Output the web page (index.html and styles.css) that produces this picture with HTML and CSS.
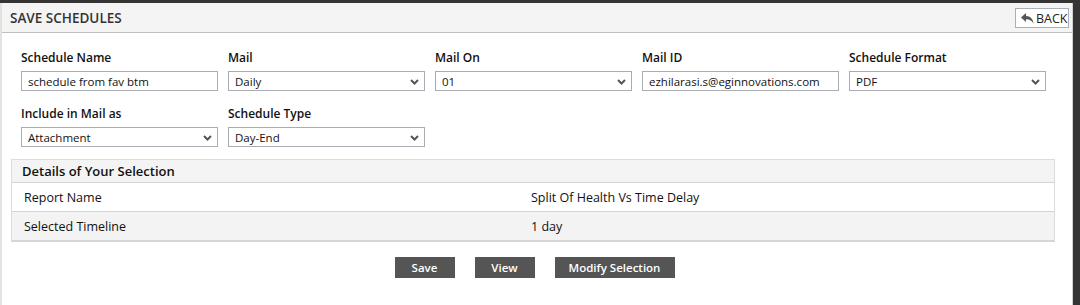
FILE: index.html
```html
<!DOCTYPE html>
<html lang="en">

<head>
    <meta charset="UTF-8">
    <meta name="viewport" content="width=device-width, initial-scale=1.0">
    <title>Save Schedules</title>
    <link rel="stylesheet" href="styles.css">
</head>

<body>
    <div class="panel">
        <header class="panel-head">
            <h1>Save Schedules</h1>
            <button type="button" class="back-btn">
                <svg width="13" height="11" viewBox="0 0 13 11"><path d="M5 0 L0 4.5 L5 9 L5 6.2 C8 6 10.5 7 12.5 10.5 C12 6 9.5 3.2 5 3 Z" fill="#555"/></svg>
                BACK
            </button>
        </header>

        <form class="schedule-form">
            <div class="field">
                <label for="schedule-name">Schedule Name</label>
                <input type="text" id="schedule-name" value="schedule from fav btm">
            </div>
            <div class="field">
                <label for="mail">Mail</label>
                <div class="select-wrap">
                    <select id="mail"><option>Daily</option></select>
                    <svg class="chevron" width="9" height="6" viewBox="0 0 9 6"><path d="M1 1 L4.5 4.5 L8 1" fill="none" stroke="#555" stroke-width="2"/></svg>
                </div>
            </div>
            <div class="field">
                <label for="mail-on">Mail On</label>
                <div class="select-wrap">
                    <select id="mail-on"><option>01</option></select>
                    <svg class="chevron" width="9" height="6" viewBox="0 0 9 6"><path d="M1 1 L4.5 4.5 L8 1" fill="none" stroke="#555" stroke-width="2"/></svg>
                </div>
            </div>
            <div class="field">
                <label for="mail-id">Mail ID</label>
                <input type="text" id="mail-id" value="ezhilarasi.s@eginnovations.com">
            </div>
            <div class="field">
                <label for="schedule-format">Schedule Format</label>
                <div class="select-wrap">
                    <select id="schedule-format"><option>PDF</option></select>
                    <svg class="chevron" width="9" height="6" viewBox="0 0 9 6"><path d="M1 1 L4.5 4.5 L8 1" fill="none" stroke="#555" stroke-width="2"/></svg>
                </div>
            </div>
            <div class="field">
                <label for="include-as">Include in Mail as</label>
                <div class="select-wrap">
                    <select id="include-as"><option>Attachment</option></select>
                    <svg class="chevron" width="9" height="6" viewBox="0 0 9 6"><path d="M1 1 L4.5 4.5 L8 1" fill="none" stroke="#555" stroke-width="2"/></svg>
                </div>
            </div>
            <div class="field">
                <label for="schedule-type">Schedule Type</label>
                <div class="select-wrap">
                    <select id="schedule-type"><option>Day-End</option></select>
                    <svg class="chevron" width="9" height="6" viewBox="0 0 9 6"><path d="M1 1 L4.5 4.5 L8 1" fill="none" stroke="#555" stroke-width="2"/></svg>
                </div>
            </div>
        </form>

        <section class="details">
            <h2>Details of Your Selection</h2>
            <div class="details-row">
                <span class="details-key">Report Name</span>
                <span>Split Of Health Vs Time Delay</span>
            </div>
            <div class="details-row alt">
                <span class="details-key">Selected Timeline</span>
                <span>1 day</span>
            </div>
        </section>

        <div class="actions">
            <button type="button" class="btn">Save</button>
            <button type="button" class="btn">View</button>
            <button type="button" class="btn wide">Modify Selection</button>
        </div>
    </div>
</body>

</html>
```

FILE: styles.css
```css
body {
    font-family: "Open Sans", "Liberation Sans", sans-serif;
    margin: 0;
    padding: 0;
    background-color: #353535;
    color: #111;
    height: 305px;
    overflow: hidden;
}

.panel {
    margin-top: 3px;
    width: 1070px;
    height: 302px;
    background: #fff;
    border-left: 2px solid #e2e2e2;
    border-right: 1px solid #d0d0d0;
}

.panel-head {
    height: 29px;
    background-color: #f4f4f4;
    border-bottom: 1px solid #bdbdbd;
    display: flex;
    align-items: center;
    justify-content: space-between;
    padding: 0 3px 0 8px;
}

.panel-head h1 {
    margin: 0;
    font-size: 13.5px;
    font-weight: 600;
    text-transform: uppercase;
    color: #333;
}

.back-btn {
    display: flex;
    align-items: center;
    gap: 2px;
    height: 20px;
    width: 54px;
    padding: 0 0 0 5px;
    margin-top: 1px;
    background: #fff;
    border: 1px solid #aab0b8;
    font-family: inherit;
    font-size: 12.5px;
    color: #222;
    cursor: pointer;
}

.schedule-form {
    display: grid;
    grid-template-columns: repeat(5, 197px);
    column-gap: 10px;
    row-gap: 15px;
    padding: 17px 0 0 19px;
}

.field label {
    display: block;
    font-size: 12px;
    font-weight: 600;
    line-height: 16px;
    margin-bottom: 5px;
}

.field input,
.field select {
    display: block;
    box-sizing: border-box;
    width: 197px;
    height: 20px;
    margin: 0;
    padding: 0 6px;
    border: 1px solid #a9adb3;
    border-radius: 0;
    background: #fff;
    font-family: inherit;
    font-size: 11.5px;
    color: #111;
    appearance: none;
    -webkit-appearance: none;
}

.select-wrap {
    position: relative;
}

.chevron {
    position: absolute;
    right: 6px;
    top: 8px;
    pointer-events: none;
}

.details {
    margin: 12px 0 0 9px;
    width: 1042px;
    border: 1px solid #dcdcdc;
    border-bottom: 2px solid #d6d6d6;
    font-size: 12.5px;
}

.details h2 {
    margin: 0;
    height: 22px;
    line-height: 22px;
    padding-left: 10px;
    background-color: #f4f4f4;
    border-bottom: 1px solid #d4d4d4;
    font-size: 13px;
    font-weight: 600;
}

.details-row {
    display: flex;
    align-items: center;
    height: 28px;
    padding-left: 12px;
    border-bottom: 1px solid #d4d4d4;
}

.details-row.alt {
    background-color: #f3f3f3;
    border-bottom: none;
}

.details-key {
    width: 507px;
}

.actions {
    display: flex;
    justify-content: center;
    gap: 20px;
    margin-top: 15px;
    padding-right: 5px;
}

.btn {
    width: 60px;
    height: 21px;
    padding: 0;
    border: none;
    background-color: #555;
    color: #fff;
    font-family: inherit;
    font-size: 11.5px;
    font-weight: 600;
    cursor: pointer;
}

.btn.wide {
    width: 120px;
}
```
